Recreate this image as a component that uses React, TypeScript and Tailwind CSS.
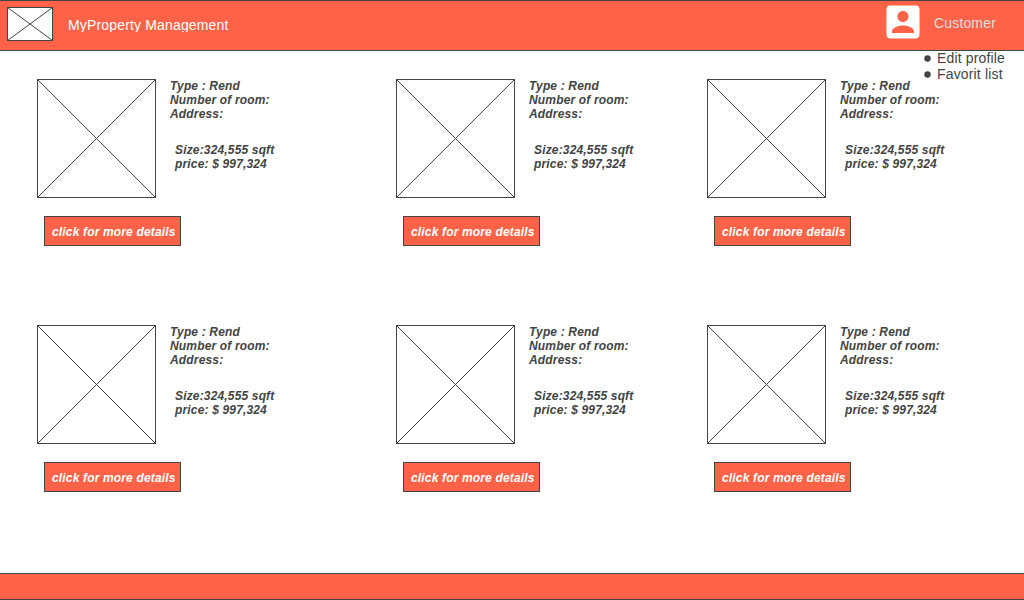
const COLUMNS = ["w-[359px]", "w-[311px]", "w-[280px]"];

function Placeholder({ width, height, crisp }: { width: number; height: number; crisp?: boolean }) {
  return (
    <svg width={width} height={height} viewBox={`0 0 ${width} ${height}`} className="block shrink-0">
      <rect x={0.5} y={0.5} width={width - 1} height={height - 1} fill="#fff" stroke="#444" />
      <path
        d={`M0.5 0.5L${width - 0.5} ${height - 0.5}M0.5 ${height - 0.5}L${width - 0.5} 0.5`}
        stroke="#444"
        strokeWidth={1}
        shapeRendering={crisp ? "crispEdges" : "auto"}
      />
    </svg>
  );
}

function PropertyCard() {
  return (
    <article className="flex flex-col">
      <div className="flex">
        <Placeholder width={119} height={119} crisp />
        <div className="ml-[14px] text-[12px] leading-[14px] font-bold whitespace-nowrap italic tracking-[0.16px]">
          <p>Type : Rend</p>
          <p>Number of room:</p>
          <p>Address:</p>
          <div className="mt-[22px] ml-[5px]">
            <p>Size:324,555 sqft</p>
            <p>price: $ 997,324</p>
          </div>
        </div>
      </div>
      <button className="mt-[18px] ml-[7px] h-[30px] w-[137px] border border-[#444] bg-[#ff6347] pt-[2px] pl-[7px] text-left text-[12px] leading-[14px] font-bold whitespace-nowrap text-white italic tracking-[0.16px]">
        click for more details
      </button>
    </article>
  );
}

function CardRow() {
  return (
    <div className="flex h-[246px] pl-[37px]">
      {COLUMNS.map((width) => (
        <div key={width} className={`${width} shrink-0`}>
          <PropertyCard />
        </div>
      ))}
    </div>
  );
}

export default function App() {
  return (
    <div className="flex h-[600px] w-[1024px] flex-col overflow-hidden bg-white font-['Liberation_Sans',Arial,sans-serif] text-[#444]">
      <header className="relative flex h-[51px] shrink-0 border-y border-[#444] bg-[#ff6347]">
        <div className="mt-[6px] ml-[7px]">
          <Placeholder width={46} height={34} />
        </div>
        <h1 className="mt-[16px] ml-[15px] h-[15px] overflow-hidden text-[14px] leading-[16px] whitespace-nowrap text-white tracking-[0.16px]">
          MyProperty Management
        </h1>
        <div className="ml-auto flex">
          <svg width={34} height={34} viewBox="2.75 2.75 18.5 18.5" className="mt-[4px] mr-[14px]" fill="#fff">
            <path d="M3 5v14c0 1.1.89 2 2 2h14c1.1 0 2-.9 2-2V5c0-1.1-.9-2-2-2H5c-1.11 0-2 .9-2 2zm12 4c0 1.66-1.34 3-3 3s-3-1.34-3-3 1.34-3 3-3 3 1.34 3 3zm-9 8c0-2 4-3.1 6-3.1s6 1.1 6 3.1v1H6v-1z" />
          </svg>
          <span className="mt-[14px] w-[90px] text-[14px] leading-[16px] text-[#ddd] tracking-[0.16px]">Customer</span>
        </div>
        <ul className="absolute top-[49px] left-[924px] text-[14px] leading-[16px] whitespace-nowrap tracking-[0.16px]">
          {["Edit profile", "Favorit list"].map((label) => (
            <li key={label} className="flex items-center">
              <svg width={7} height={7} viewBox="0 0 7 7" className="mt-[1px] mr-[6px]">
                <circle cx={3.5} cy={3.5} r={3.2} fill="#444" />
              </svg>
              {label}
            </li>
          ))}
        </ul>
      </header>
      <main className="flex grow flex-col pt-[28px]">
        <CardRow />
        <CardRow />
      </main>
      <footer className="h-[27px] shrink-0 border-y border-[#444] bg-[#ff6347]" />
    </div>
  );
}
